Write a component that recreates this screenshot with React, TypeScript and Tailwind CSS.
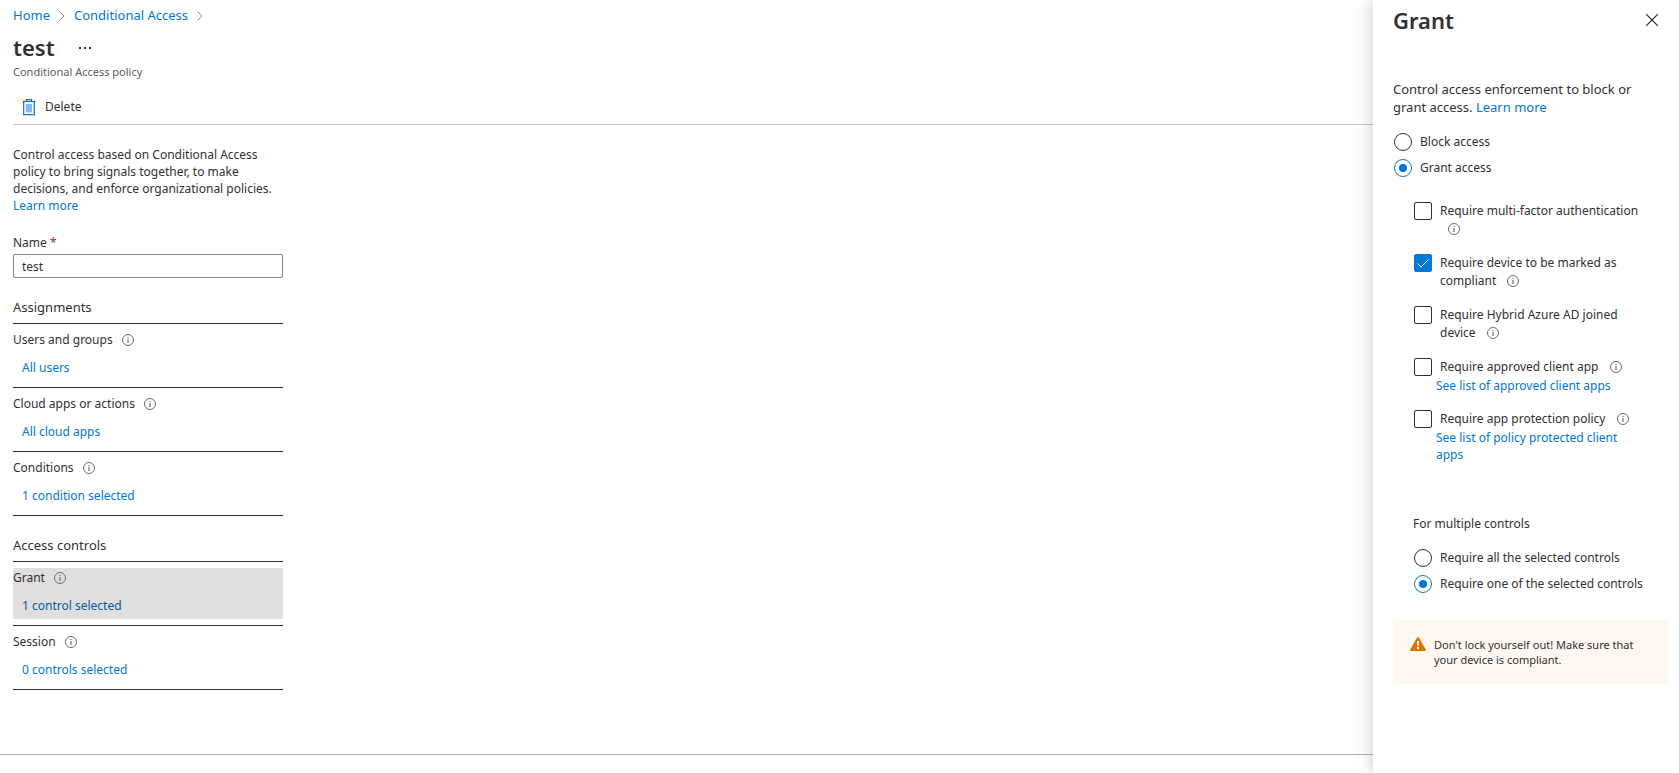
import { useState } from "react";
import type { ReactNode } from "react";

const InfoIcon = () => (
    <svg viewBox="0 0 12 12" className="block w-3 h-3 shrink-0" fill="none" stroke="#6f6d6b" aria-hidden="true">
        <circle cx="6" cy="6" r="5.5" strokeWidth="1" />
        <path d="M6 5v4" strokeWidth="1.2" />
        <path d="M6 3v1" strokeWidth="1.2" />
    </svg>
);

const Chevron = () => (
    <svg viewBox="0 0 6 10" className="w-[6px] h-[10px]" fill="none" stroke="#8a8886" aria-hidden="true">
        <path d="M0.5 0.5L5 5L0.5 9.5" />
    </svg>
);

const TrashIcon = () => (
    <svg viewBox="0 0 14 17" className="w-[14px] h-[17px]" aria-hidden="true">
        <path d="M4.5 2V0.7h5V2" fill="none" stroke="#0078d4" strokeWidth="1.2" />
        <path d="M0.5 2.5h13" stroke="#0078d4" strokeWidth="1.2" />
        <path d="M1.7 2.5v13.2h10.6V2.5" fill="none" stroke="#0078d4" strokeWidth="1.2" />
        <rect x="4" y="5" width="6" height="8.5" fill="#83b9eb" />
    </svg>
);

const WarningIcon = () => (
    <svg viewBox="0 0 16 14" className="w-4 h-[14px] shrink-0" aria-hidden="true">
        <path d="M7.1 0.6Q8 -0.5 8.9 0.6L15.8 12.4Q16.2 14 14.8 14H1.2Q-0.2 14 0.2 12.4Z" fill="#db7500" />
        <path d="M7 4h2l-0.3 5H7.3Z" fill="#fff" />
        <rect x="7" y="10" width="2" height="2" fill="#fff" />
    </svg>
);

const Link = ({ children }: { children: ReactNode }) => (
    <a href="#" className="text-[#0078d4] hover:underline">{children}</a>
);

type SettingProps = { label: string; value: string; selected?: boolean };

const Setting = ({ label, value, selected }: SettingProps) => (
    <div className="border-b border-[#323130] py-[6px]">
        <div className={selected ? "bg-[#e1dfdd] pb-1" : "pb-1"}>
            <div className="flex items-center gap-[9px] h-5">
                <span>{label}</span>
                <InfoIcon />
            </div>
            <button type="button" className={selected ? "block mt-[9px] pl-[9px] leading-[18px] text-[#005a9e]" : "block mt-[9px] pl-[9px] leading-[18px] text-[#0078d4]"}>
                {value}
            </button>
        </div>
    </div>
);

type RadioProps = { name: string; label: string; checked: boolean; onChange: () => void };

const Radio = ({ name, label, checked, onChange }: RadioProps) => (
    <label className="flex items-center gap-2 h-[18px]">
        <span className="grid place-items-center">
            <input
                type="radio"
                name={name}
                checked={checked}
                onChange={onChange}
                className="peer col-start-1 row-start-1 appearance-none w-[18px] h-[18px] rounded-full border border-[#323130] checked:border-[#0078d4]"
            />
            <span className="hidden peer-checked:block col-start-1 row-start-1 w-2 h-2 rounded-full bg-[#0078d4] pointer-events-none" />
        </span>
        {label}
    </label>
);

type CheckProps = { label: string; defaultChecked?: boolean; children?: ReactNode };

const Check = ({ label, defaultChecked, children }: CheckProps) => (
    <div>
        <label className="flex items-start gap-2">
            <span className="grid place-items-center shrink-0">
                <input
                    type="checkbox"
                    defaultChecked={defaultChecked}
                    className="peer col-start-1 row-start-1 appearance-none w-[18px] h-[18px] rounded-xs border border-[#323130] checked:bg-[#0078d4] checked:border-[#0078d4]"
                />
                <svg viewBox="0 0 12 9" className="hidden peer-checked:block col-start-1 row-start-1 w-3 h-[9px] pointer-events-none" fill="none" stroke="#fff" aria-hidden="true">
                    <path d="M0.5 4.5L4 8L11.5 0.5" />
                </svg>
            </span>
            <span>
                {label} <span className="inline-flex items-center h-[18px] pl-2 align-top"><InfoIcon /></span>
            </span>
        </label>
        {children && <div className="mt-px pl-[22px] pr-4 leading-[17px]">{children}</div>}
    </div>
);

const GrantPanel = () => {
    const [access, setAccess] = useState("grant");
    const [multiple, setMultiple] = useState("one");

    return (
        <aside className="relative z-10 w-[306px] shrink-0 bg-white pl-5 pr-[11px] leading-[18px] shadow-[0_0_16px_rgba(0,0,0,0.22)]">
            <div className="flex items-center justify-between h-10 pr-[10px]">
                <h2 className="text-[22px] font-semibold">Grant</h2>
                <button type="button" aria-label="Close">
                    <svg viewBox="0 0 12 12" className="w-3 h-3" fill="none" stroke="#201f1e" strokeWidth="1.1">
                        <path d="M0.3 0.3L11.7 11.7M11.7 0.3L0.3 11.7" />
                    </svg>
                </button>
            </div>
            <p className="mt-10 pr-5 text-[13px] leading-[18px]">
                Control access enforcement to block or grant access. <Link>Learn more</Link>
            </p>
            <div className="mt-[17px] flex flex-col gap-2 pl-px">
                <Radio name="access" label="Block access" checked={access === "block"} onChange={() => setAccess("block")} />
                <Radio name="access" label="Grant access" checked={access === "grant"} onChange={() => setAccess("grant")} />
            </div>
            <div className="mt-[25px] pl-[21px] pr-4 flex flex-col gap-4">
                <Check label="Require multi-factor authentication" />
                <Check label="Require device to be marked as compliant" defaultChecked />
                <Check label="Require Hybrid Azure AD joined device" />
                <Check label="Require approved client app">
                    <Link>See list of approved client apps</Link>
                </Check>
                <Check label="Require app protection policy">
                    <Link>See list of policy protected client apps</Link>
                </Check>
            </div>
            <fieldset className="mt-[52px] pl-5">
                <legend>For multiple controls</legend>
                <div className="mt-4 flex flex-col gap-2 pl-px">
                    <Radio name="multiple" label="Require all the selected controls" checked={multiple === "all"} onChange={() => setMultiple("all")} />
                    <Radio name="multiple" label="Require one of the selected controls" checked={multiple === "one"} onChange={() => setMultiple("one")} />
                </div>
            </fieldset>
            <div className="mt-[27px] flex gap-2 rounded-xs bg-[#fff8f0] p-[17px] text-[11px] leading-[15px]">
                <WarningIcon />
                <p>Don't lock yourself out! Make sure that your device is compliant.</p>
            </div>
        </aside>
    );
};

const App = () => {
    return (
        <div className="flex min-h-screen bg-white text-xs text-[#323130] font-['Noto_Sans','Open_Sans',sans-serif]">
            <main className="flex flex-col flex-1 min-w-0">
                <div className="flex-1 pl-[13px]">
                    <nav aria-label="Breadcrumb" className="flex items-center gap-[9px] h-8 text-[13px]">
                        <Link>Home</Link>
                        <Chevron />
                        <Link>Conditional Access</Link>
                        <Chevron />
                    </nav>
                    <div className="flex items-center gap-6 h-8">
                        <h1 className="text-[22px] font-semibold">test</h1>
                        <button type="button" aria-label="More">
                            <svg viewBox="0 0 12 2" className="w-3 h-[2px]" fill="#323130">
                                <rect x="0" width="2" height="2" />
                                <rect x="5" width="2" height="2" />
                                <rect x="10" width="2" height="2" />
                            </svg>
                        </button>
                    </div>
                    <p className="text-[11px] leading-4 text-[#605e5c]">Conditional Access policy</p>
                    <div className="mt-[10px] pl-[9px] h-[35px] flex items-center border-b border-[#c8c6c4]">
                        <button type="button" className="flex items-center gap-[9px]">
                            <TrashIcon />
                            Delete
                        </button>
                    </div>
                    <div className="w-[270px]">
                        <p className="mt-[21px] leading-[17px]">
                            Control access based on Conditional Access policy to bring signals together, to make decisions, and enforce organizational policies.{" "}
                            <Link>Learn more</Link>
                        </p>
                        <label htmlFor="name" className="block mt-5 leading-[18px]">
                            Name <span className="text-[#a4262c]">*</span>
                        </label>
                        <input id="name" defaultValue="test" className="mt-[2px] block w-full h-6 rounded-xs border border-[#8a8886] px-2" />
                        <h2 className="mt-5 h-[26px] text-[13px] leading-[18px] border-b border-[#323130]">Assignments</h2>
                        <Setting label="Users and groups" value="All users" />
                        <Setting label="Cloud apps or actions" value="All cloud apps" />
                        <Setting label="Conditions" value="1 condition selected" />
                        <h2 className="mt-5 h-[26px] text-[13px] leading-[18px] border-b border-[#323130]">Access controls</h2>
                        <Setting label="Grant" value="1 control selected" selected />
                        <Setting label="Session" value="0 controls selected" />
                    </div>
                </div>
                <footer className="h-[19px] border-t border-[#b3b0ad]" />
            </main>
            <GrantPanel />
        </div>
    );
};

export default App;
